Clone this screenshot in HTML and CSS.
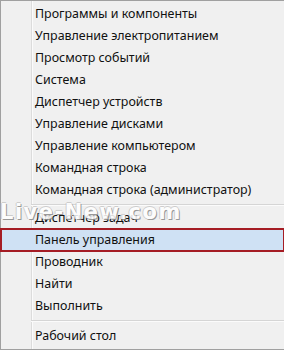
FILE: index.html
```html
<!DOCTYPE html>
<html lang="ru">
  <head>
    <meta charset="UTF-8" />
    <title>Win+X меню</title>
    <link rel="stylesheet" href="styles.css">
  </head>
  <body>
    <div class="menu">
      <!-- Первая группа -->
      <div class="item"><span class="label">Программы и компоненты</span></div>
      <div class="item"><span class="label">Управление электропитанием</span></div>
      <div class="item"><span class="label">Просмотр событий</span></div>
      <div class="item"><span class="label">Система</span></div>
      <div class="item"><span class="label">Диспетчер устройств</span></div>
      <div class="item"><span class="label">Управление дисками</span></div>
      <div class="item"><span class="label">Управление компьютером</span></div>
      <div class="item"><span class="label">Командная строка</span></div>
      <div class="item"><span class="label">Командная строка (администратор)</span></div>

      <div class="separator"></div>

      <!-- Вторая группа -->
      <div class="item"><span class="label">Диспетчер задач</span></div>
      <div class="item selected"><span class="label">Панель управления</span></div>
      <div class="item"><span class="label">Проводник</span></div>
      <div class="item"><span class="label">Найти</span></div>
      <div class="item"><span class="label">Выполнить</span></div>

      <div class="separator last"></div>

      <div class="item"><span class="label">Рабочий стол</span></div>

      <!-- Водяной знак -->
      <div class="watermark">Live-New.com</div>
    </div>
  </body>
</html>
```

FILE: styles.css
```css
* {
  margin: 0;
  padding: 0;
  box-sizing: border-box;
}

body {
  width: 284px;
  height: 350px;
  overflow: hidden;
  font-family: "Noto Sans", "Open Sans", sans-serif;
  font-size: 12.45px;
  color: #111;
  background: #f0f0f0;
}

.menu {
  position: relative;
  height: 350px;
  padding-top: 2px;
  border: 1px solid #a0a0a0;
  border-right: none;
  background: linear-gradient(
    to right,
    #f0f0f0 30px,
    #dcdcdc 30px,
    #dcdcdc 31px,
    #fbfbfb 31px,
    #fbfbfb 32px,
    #f0f0f0 32px
  );
}

.item {
  display: flex;
  align-items: center;
  height: 22px;
  padding-left: 34px;
}

.label {
  line-height: 22px;
  white-space: nowrap;
}

.item.selected {
  background: #cfe1f4;
  outline: 2px solid #a51c24;
  outline-offset: -1px;
}

.separator {
  height: 2px;
  margin: 3px 0 1px 30px;
  border-top: 1px solid #d5d5d5;
  border-bottom: 1px solid #fbfbfb;
}

.separator.last {
  margin-bottom: 3px;
}

.watermark {
  position: absolute;
  left: -1px;
  top: 199px;
  font-family: "DejaVu Sans", sans-serif;
  font-size: 21px;
  font-weight: bold;
  letter-spacing: 1.5px;
  color: #fff;
  opacity: 0.85;
  text-shadow: 1px 1px 0 #8a8a8a, -1px 0 0 #c8c8c8, 0 -1px 0 #c8c8c8;
  pointer-events: none;
}
```
